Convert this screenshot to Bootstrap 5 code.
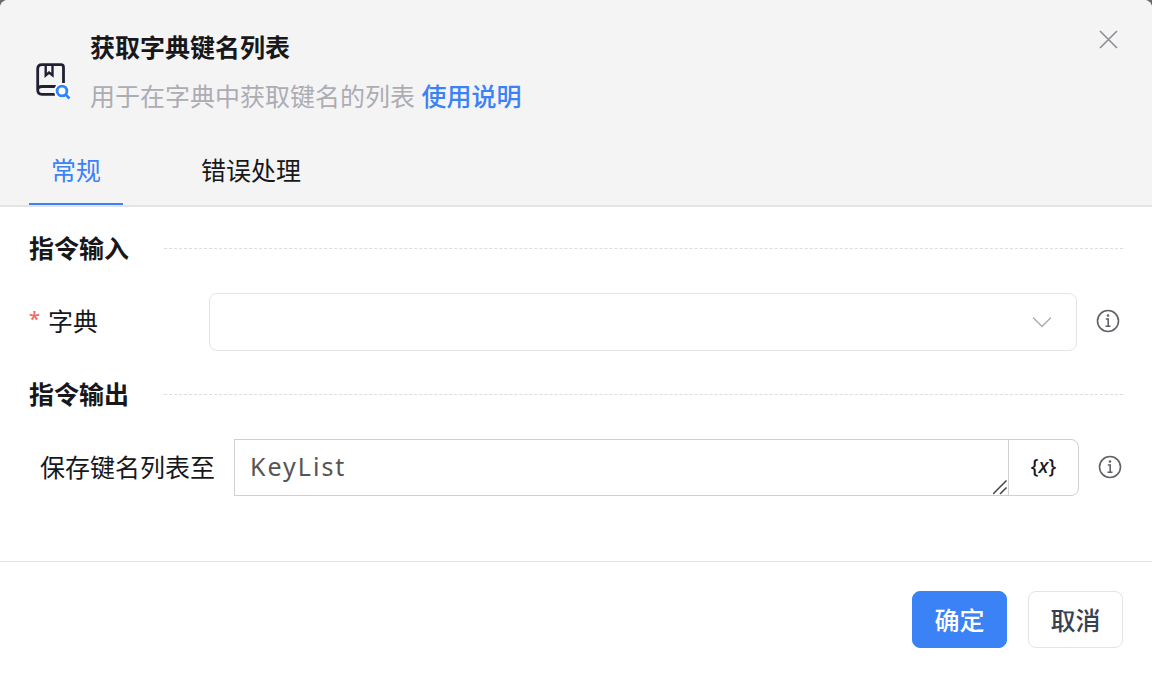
<!DOCTYPE html>
<html lang="zh-CN">
<head>
<meta charset="utf-8">
<meta name="viewport" content="width=device-width, initial-scale=1">
<title>获取字典键名列表</title>
<link rel="stylesheet" href="https://cdn.jsdelivr.net/npm/bootstrap@5.3.0/dist/css/bootstrap.min.css">
<style>
  body {
    background: #6b6b6d;
    color: #18181b;
    font-family: "Noto Sans", "Noto Sans CJK SC", sans-serif;
    font-size: 25px;
    line-height: 38px;
  }
  .dialog-panel { border-radius: 8px 8px 0 0; overflow: hidden; background: #fff; }
  .dialog-head { background: #f4f4f5; border-bottom: 2px solid #e4e4e7; }
  .head-row { padding: 28px 34px 22px; gap: 18px; }
  .head-icon { width: 38px; height: 38px; margin-top: 34px; }
  .head-title { font-size: 25px; line-height: 38px; font-weight: 700; margin: 0 0 11px; }
  .head-desc { color: #acacb3; }
  .doc-link { color: #3b82f6; text-decoration: none; font-weight: 500; }
  .close-btn { line-height: 0; color: #8c8e94; }
  .tab-bar { padding: 0 29px; gap: 56px; }
  .tab-btn {
    border: 0; border-bottom: 2px solid transparent; background: none;
    color: #18181b; height: 68px; padding: 0 22px;
  }
  .tab-btn.active { color: #3b82f6; border-bottom-color: #3b82f6; }
  .dialog-main { padding: 22px 29px 65px; }
  .sec-head { gap: 35px; margin-bottom: 26px; }
  .sec-head h2 { font-size: 25px; line-height: 38px; font-weight: 700; margin: 0; }
  .sec-rule { border-top: 1px dashed #dcdce2; }
  .field-row { gap: 19px; padding-right: 3px; }
  .out-row { padding-right: 1px; }
  .field-row label, .info-btn { margin-bottom: 2px; }
  .field-label { width: 161px; gap: 8px; }
  .out-label { padding-left: 11px; }
  .req-mark { color: #f56c6c; font-size: 20px; line-height: 34px; font-weight: 600; }
  .dict-select {
    height: 58px; border: 1px solid #e4e4e7; border-radius: 8px; font-size: 25px;
    background-image: url("data:image/svg+xml,%3Csvg xmlns='http://www.w3.org/2000/svg' viewBox='0 0 20 20'%3E%3Cpath d='M1 5.5l9 9 9-9' fill='none' stroke='%23a8abb2' stroke-width='1.4'/%3E%3C/svg%3E");
    background-size: 20px 20px; background-position: right 24px center;
  }
  .name-box {
    height: 57px; border: 1px solid #d0d0d3; border-radius: 0; resize: vertical;
    padding: 7px 15px; font-size: 25px; line-height: 38px; letter-spacing: 2px;
    color: #555; overflow: hidden;
  }
  .name-box::-webkit-resizer {
    background: url("data:image/svg+xml,%3Csvg xmlns='http://www.w3.org/2000/svg' viewBox='0 0 15 15'%3E%3Cpath d='M0 14L13.500 .5M7 14l6.500-6.500' fill='none' stroke='%23444' stroke-width='1.500'/%3E%3C/svg%3E") center / 15px 15px no-repeat;
  }
  .var-btn {
    width: 71px; border: 1px solid #d0d0d3; border-radius: 0 8px 8px 0;
    background: #fff; color: #18181b; font-size: 20px; line-height: 38px; font-weight: 500;
    padding: 0 0 3px;
  }
  .info-btn { color: #606266; line-height: 0; }
  .dialog-foot { border-top: 1px solid #e4e4e7; padding: 29px 29px 28px; gap: 21px; }
  .act-btn {
    width: 95px; height: 57px; padding: 0; border-radius: 8px;
    font-size: 25px; line-height: 38px; font-weight: 500;
  }
  .act-ok { background: #3b82f6; border-color: #3b82f6; color: #fff; }
  .act-cancel { background: #fff; border-color: #e4e4e7; color: #374151; }
</style>
</head>
<body>
<div class="dialog-panel min-vh-100 d-flex flex-column" role="dialog" aria-labelledby="dlgTitle">
  <header class="dialog-head">
    <div class="head-row d-flex align-items-start">
      <svg class="head-icon flex-shrink-0" viewBox="0 0 38 38" fill="none" aria-hidden="true">
        <path d="M29.500 21V5.500Q29.500 2.700 27 2.700H8Q3.700 2.700 3.700 7V28Q3.700 32.300 8 32.300H21M3.700 28Q3.700 24.500 8 24.500H22" stroke="#231f33" stroke-width="2.800"/>
        <path d="M11.700 2.500V13.300L15 10.500 18.500 13.300V2.500" stroke="#231f33" stroke-width="2.400"/>
        <circle cx="28" cy="29" r="8" fill="#fff"/>
        <path d="M31 32l5 5" stroke="#fff" stroke-width="5"/>
        <circle cx="28" cy="29" r="4.900" stroke="#2b85ff" stroke-width="2.800"/>
        <path d="M31.500 32.500l4 4" stroke="#2b85ff" stroke-width="2.800"/>
      </svg>
      <div class="flex-grow-1">
        <h1 class="head-title" id="dlgTitle">获取字典键名列表</h1>
        <div class="head-desc">用于在字典中获取键名的列表 <a class="doc-link" href="#">使用说明</a></div>
      </div>
      <button type="button" class="close-btn btn p-0 border-0" aria-label="关闭">
        <svg width="20" height="24" viewBox="0 0 20 24" fill="none" stroke="currentColor" stroke-width="1.600"><path d="M2 3l17 17M19 3l-17 17"/></svg>
      </button>
    </div>
    <div class="tab-bar d-flex" role="tablist">
      <button type="button" class="tab-btn active" role="tab" aria-selected="true">常规</button>
      <button type="button" class="tab-btn" role="tab" aria-selected="false">错误处理</button>
    </div>
  </header>

  <main class="dialog-main flex-grow-1">
    <div class="sec-head d-flex align-items-center">
      <h2>指令输入</h2><div class="sec-rule flex-grow-1"></div>
    </div>
    <div class="field-row d-flex align-items-center mb-4">
      <label class="field-label d-flex flex-shrink-0" for="dict"><span class="req-mark">*</span>字典</label>
      <select class="dict-select form-select" id="dict"><option value=""></option></select>
      <button type="button" class="info-btn btn p-0 border-0" aria-label="字典说明">
        <svg width="24" height="24" viewBox="0 0 24 24" fill="none" stroke="currentColor" stroke-width="1.600"><circle cx="12" cy="12" r="10.500"/><path d="M9.800 10h2.400v7M9.500 17.200h5"/><circle cx="12" cy="6.500" r="1.300" fill="currentColor" stroke="none"/></svg>
      </button>
    </div>
    <div class="sec-head d-flex align-items-center">
      <h2>指令输出</h2><div class="sec-rule flex-grow-1"></div>
    </div>
    <div class="field-row out-row d-flex align-items-center">
      <label class="out-label flex-shrink-0" for="saveTo">保存键名列表至</label>
      <div class="input-group flex-nowrap">
        <textarea class="name-box form-control" id="saveTo" rows="1" spellcheck="false">KeyList</textarea>
        <button type="button" class="var-btn" aria-label="选择变量">{<i>x</i>}</button>
      </div>
      <button type="button" class="info-btn btn p-0 border-0" aria-label="保存说明">
        <svg width="24" height="24" viewBox="0 0 24 24" fill="none" stroke="currentColor" stroke-width="1.600"><circle cx="12" cy="12" r="10.500"/><path d="M9.800 10h2.400v7M9.500 17.200h5"/><circle cx="12" cy="6.500" r="1.300" fill="currentColor" stroke="none"/></svg>
      </button>
    </div>
  </main>

  <footer class="dialog-foot d-flex justify-content-end">
    <button type="button" class="act-btn act-ok btn">确定</button>
    <button type="button" class="act-btn act-cancel btn">取消</button>
  </footer>
</div>
<script src="https://cdn.jsdelivr.net/npm/bootstrap@5.3.0/dist/js/bootstrap.bundle.min.js"></script>
</body>
</html>
